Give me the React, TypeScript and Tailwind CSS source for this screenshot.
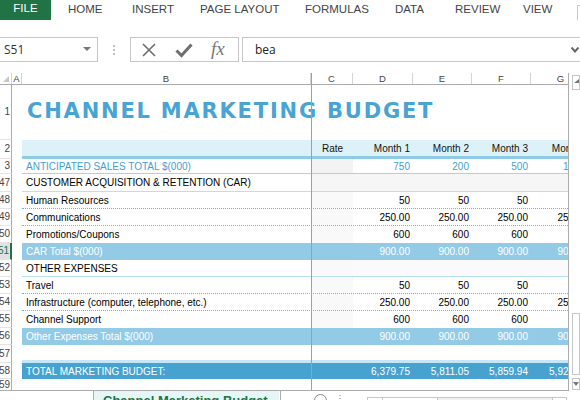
import React from "react";

const SANS = "font-['Liberation_Sans',Arial,sans-serif]";

function RowHead({ n, sel }: { n?: string; sel?: boolean }) {
  return (
    <div
      className={
        "w-[12px] shrink-0 flex items-center justify-end overflow-hidden whitespace-nowrap text-[10px] leading-none border-b border-b-[#e3e3e3] " +
        (sel
          ? "bg-[#e1e1e1] text-[#217346] border-r-2 border-r-[#217346] pr-[1px]"
          : "border-r border-r-[#ababab] text-[#444] pr-[1px]")
      }
    >
      {n}
    </div>
  );
}

function Row({
  n,
  h,
  sel,
  band,
  children,
}: {
  n?: string;
  h: string;
  sel?: boolean;
  band: string;
  children?: React.ReactNode;
}) {
  return (
    <div className={"flex shrink-0 " + h}>
      <RowHead n={n} sel={sel} />
      <div className="w-[10px] shrink-0" />
      <div className={"flex flex-1 min-w-0 " + band}>{children}</div>
    </div>
  );
}

function DataRow({
  n,
  label,
  vals,
  band,
  labelCls,
  numCls,
  cBg,
  restBg,
  sel,
  h = "h-[17px]",
}: {
  n: string;
  label: string;
  vals: string[];
  band: string;
  labelCls: string;
  numCls: string;
  cBg: string;
  restBg: string;
  sel?: boolean;
  h?: string;
}) {
  const widths = ["w-[60px]", "w-[59px]", "w-[59px]", "w-[60px]"];
  return (
    <Row n={n} h={h} band={band} sel={sel}>
      <div className={"w-[289px] shrink-0 flex items-center pl-[4px] whitespace-nowrap text-[10px] " + labelCls}>
        {label}
      </div>
      <div className={"w-[42px] shrink-0 " + cBg} />
      {vals.map((v, i) => (
        <div
          key={i}
          className={widths[i] + " shrink-0 flex items-center justify-end pr-[3px] whitespace-nowrap text-[10px] " + numCls + " " + restBg}
        >
          {v}
        </div>
      ))}
    </Row>
  );
}

export default function App() {
  const colHeads: [string, string][] = [
    ["A", "w-[10px]"],
    ["B", "w-[289px]"],
    ["C", "w-[42px]"],
    ["D", "w-[60px]"],
    ["E", "w-[59px]"],
    ["F", "w-[59px]"],
    ["G", "w-[60px]"],
  ];
  return (
    <div className={"w-[580px] h-[400px] bg-white overflow-hidden relative flex flex-col " + SANS}>
      {/* Ribbon tabs */}
      <div className="h-[20px] flex items-stretch shrink-0 text-[11.5px] text-[#444]">
        <div className="w-[51px] bg-[#217346] text-white flex items-center justify-center pb-[3px]">FILE</div>
        <div className="w-[17px]" />
        <div className="w-[64px] pt-[1px]">HOME</div>
        <div className="w-[68px] pt-[1px]">INSERT</div>
        <div className="w-[105px] pt-[1px]">PAGE LAYOUT</div>
        <div className="w-[90px] pt-[1px]">FORMULAS</div>
        <div className="w-[60px] pt-[1px]">DATA</div>
        <div className="w-[68px] pt-[1px]">REVIEW</div>
        <div className="w-[54px] pt-[1px]">VIEW</div>
        <div className="mt-[5px] w-[3px] border-l border-t border-[#c6c6c6]" />
      </div>
      <div className="h-[17px] shrink-0" />
      {/* Formula bar */}
      <div className="h-[25px] shrink-0 flex">
        <div className="w-[98px] border border-l-0 border-[#c6c6c6] flex items-center pl-[4px] pr-[6px] text-[12px] text-[#333] font-['Open_Sans',sans-serif]">
          <span className="flex-1">S51</span>
          <svg width="8" height="5" viewBox="0 0 8 5">
            <path d="M0 0 L8 0 L4 4 Z" fill="#777" />
          </svg>
        </div>
        <div className="w-[32px] flex items-center justify-center">
          <div className="flex flex-col gap-[2px]">
            <div className="w-[2px] h-[2px] bg-[#c0c0c0]" />
            <div className="w-[2px] h-[2px] bg-[#c0c0c0]" />
            <div className="w-[2px] h-[2px] bg-[#c0c0c0]" />
          </div>
        </div>
        <div className="w-[109px] border border-[#c6c6c6] flex items-center pl-[10px] gap-[18px]">
          <svg width="16" height="16" viewBox="0 0 16 16">
            <path d="M2 2 L14 14 M14 2 L2 14" stroke="#6e6e6e" strokeWidth="1.6" />
          </svg>
          <svg width="18" height="16" viewBox="0 0 18 16">
            <path d="M1.5 8.5 L6.5 13.5 L16.5 2.5" stroke="#6e6e6e" strokeWidth="3" fill="none" />
          </svg>
          <span className="font-['Liberation_Serif',serif] italic text-[19px] text-[#777] leading-none -mt-[2px]">fx</span>
        </div>
        <div className="w-[3px]" />
        <div className="flex-1 border border-r-0 border-[#c6c6c6] flex items-center pl-[12px] pr-[1px] text-[12px] text-[#222] font-['Open_Sans',sans-serif]">
          <span className="flex-1">bea</span>
          <svg width="8" height="6" viewBox="0 0 8 6">
            <path d="M0.5 0.5 L4 4.5 L7.5 0.5" stroke="#666" strokeWidth="2" fill="none" />
          </svg>
        </div>
      </div>
      <div className="h-[11px] shrink-0" />
      {/* Sheet + scrollbar */}
      <div className="h-[318px] shrink-0 flex">
        <div className="w-[569px] h-[318px] border-r border-b border-[#ababab] overflow-hidden flex flex-col">
          {/* column headers */}
          <div className="h-[12px] shrink-0 flex border-b border-[#ababab]">
            <div className="w-[12px] shrink-0 border-r border-[#d5d5d5] relative">
              <svg className="absolute right-[2px] bottom-[2px]" width="6" height="6" viewBox="0 0 6 6">
                <path d="M6 0 L6 6 L0 6 Z" fill="#c8c8c8" />
              </svg>
            </div>
            {colHeads.map(([l, w]) => (
              <div
                key={l}
                className={w + " shrink-0 border-r border-[#d5d5d5] flex items-center justify-center text-[9.5px] leading-none text-[#444]"}
              >
                {l}
              </div>
            ))}
          </div>
          {/* Row 1 title */}
          <Row n="1" h="h-[55px]" band="">
            <div className="w-full flex items-end pb-[18px] pl-[5px] whitespace-nowrap font-['DejaVu_Sans',sans-serif] font-bold text-[21px] leading-none tracking-[1.8px] text-[#48a4d4]">
              CHANNEL MARKETING BUDGET
            </div>
          </Row>
          <div className="flex-1 flex flex-col min-h-0">
            {/* Row 2 header band */}
            <Row n="2" h="h-[19px]" band="bg-[#ddf1f9] border-b-[3px] border-[#8fcbe6]">
              <div className="w-[289px] shrink-0" />
              {[
                ["Rate", "w-[42px] justify-center pl-[1px]"],
                ["Month 1", "w-[60px] justify-end pr-[3px]"],
                ["Month 2", "w-[59px] justify-end pr-[3px]"],
                ["Month 3", "w-[59px] justify-end pr-[3px]"],
                ["Month 4", "w-[60px] justify-end pr-[3px]"],
              ].map(([t, c]) => (
                <div key={t} className={c + " shrink-0 flex items-center whitespace-nowrap text-[10px] text-[#111]"}>
                  {t}
                </div>
              ))}
            </Row>
            <DataRow
              n="3"
              h="h-[15px]"
              label="ANTICIPATED SALES TOTAL $(000)"
              vals={["750", "200", "500", "1,000"]}
              band="border-b border-[#c8c8c8]"
              labelCls="text-[#3f9fd1]"
              numCls="text-[#3f9fd1]"
              cBg="bg-[#f3f3f3]"
              restBg=""
            />
            <DataRow
              n="47"
              h="h-[18px]"
              label="CUSTOMER ACQUISITION & RETENTION (CAR)"
              vals={["", "", "", ""]}
              band="border-b border-[#b9e0f1]"
              labelCls="text-black"
              numCls=""
              cBg="bg-[#f6f6f6]"
              restBg="bg-[#f6f6f6]"
            />
            <DataRow
              n="48"
              label="Human Resources"
              vals={["50", "50", "50", "50"]}
              band="border-b border-dotted border-[#62bade]"
              labelCls="text-black"
              numCls="text-black"
              cBg="bg-[#f9f9f9]"
              restBg=""
            />
            <DataRow
              n="49"
              label="Communications"
              vals={["250.00", "250.00", "250.00", "250.00"]}
              band="border-b border-dotted border-[#62bade]"
              labelCls="text-black"
              numCls="text-black"
              cBg="bg-[#f9f9f9]"
              restBg=""
            />
            <DataRow
              n="50"
              label="Promotions/Coupons"
              vals={["600", "600", "600", "600"]}
              band=""
              labelCls="text-black"
              numCls="text-black"
              cBg="bg-[#f9f9f9]"
              restBg=""
            />
            <DataRow
              n="51"
              sel
              label="CAR Total $(000)"
              vals={["900.00", "900.00", "900.00", "900.00"]}
              band="bg-[#93cbe6]"
              labelCls="text-white"
              numCls="text-white"
              cBg=""
              restBg=""
            />
            <DataRow
              n="52"
              label="OTHER EXPENSES"
              vals={["", "", "", ""]}
              band="border-b border-[#b9e0f1]"
              labelCls="text-black"
              numCls=""
              cBg="bg-[#f9f9f9]"
              restBg="bg-[#fafafa]"
            />
            <DataRow
              n="53"
              label="Travel"
              vals={["50", "50", "50", "50"]}
              band="border-b border-dotted border-[#62bade]"
              labelCls="text-black"
              numCls="text-black"
              cBg="bg-[#f9f9f9]"
              restBg=""
            />
            <DataRow
              n="54"
              label="Infrastructure (computer, telephone, etc.)"
              vals={["250.00", "250.00", "250.00", "250.00"]}
              band="border-b border-dotted border-[#62bade]"
              labelCls="text-black"
              numCls="text-black"
              cBg="bg-[#f9f9f9]"
              restBg=""
            />
            <DataRow
              n="55"
              label="Channel Support"
              vals={["600", "600", "600", "600"]}
              band=""
              labelCls="text-black"
              numCls="text-black"
              cBg="bg-[#f9f9f9]"
              restBg=""
            />
            <DataRow
              n="56"
              label="Other Expenses Total $(000)"
              vals={["900.00", "900.00", "900.00", "900.00"]}
              band="bg-[#93cbe6]"
              labelCls="text-white"
              numCls="text-white"
              cBg=""
              restBg=""
            />
            <Row n="57" h="h-[18px]" band="border-b-[3px] border-[#c6e6f4]" />
            <DataRow
              n="58"
              h="h-[16px]"
              label="TOTAL MARKETING BUDGET:"
              vals={["6,379.75", "5,811.05", "5,859.94", "5,928.41"]}
              band="bg-[#47a2cf]"
              labelCls="text-white"
              numCls="text-white"
              cBg=""
              restBg=""
            />
            <Row n="59" h="h-[12px]" band="" />
          </div>
        </div>
        {/* vertical scrollbar */}
        <div className="w-[11px] flex flex-col pl-[3px] pt-[2px] pb-[1px]">
          <div className="h-[15px] border border-[#c6c6c6] flex items-start justify-center pt-[3px]">
            <svg width="5" height="4" viewBox="0 0 5 4">
              <path d="M0 4 L5 4 L5 0 Z" fill="#777" />
            </svg>
          </div>
          <div className="flex-1" />
          <div className="h-[62px] border border-[#c6c6c6] bg-white" />
          <div className="h-[3px]" />
          <div className="h-[12px] border border-[#c6c6c6] flex items-start justify-center pt-[3px]">
            <svg width="6" height="4" viewBox="0 0 6 4">
              <path d="M0 0 L6 0 L3 4 Z" fill="#777" />
            </svg>
          </div>
        </div>
      </div>
      {/* sheet tabs */}
      <div className="h-[9px] shrink-0 flex">
        <div className="w-[94px] border-r border-[#ababab]" />
        <div className="w-[185px] bg-[#e6f5f6] pl-[9px] pt-[2px] font-bold text-[13px] leading-[16px] text-[#217346] whitespace-nowrap overflow-hidden">
          Channel Marketing Budget
        </div>
        <div className="w-[2px] border-r border-[#ababab]" />
        <div className="w-[86px] flex items-start pl-[33px] pt-[3px]">
          <div className="w-[13px] h-[13px] rounded-full border border-[#888] shrink-0" />
          <span className="ml-[8px] text-[10px] leading-none text-[#888]">⋮</span>
        </div>
        <div className="w-[200px] border-t border-l border-r border-[#c6c6c6] mt-[6px] flex">
          <div className="w-[15px] border-r border-[#c6c6c6]" />
          <div className="w-[55px] border-r border-[#c6c6c6] bg-white" />
          <div className="flex-1 bg-[#f0f0f0]" />
          <div className="w-[14px] border-l border-[#c6c6c6]" />
        </div>
      </div>
      {/* frozen pane divider */}
      <div className="absolute left-[311px] top-[73px] w-[1px] h-[317px] bg-[#a0a0a0]" />
    </div>
  );
}
